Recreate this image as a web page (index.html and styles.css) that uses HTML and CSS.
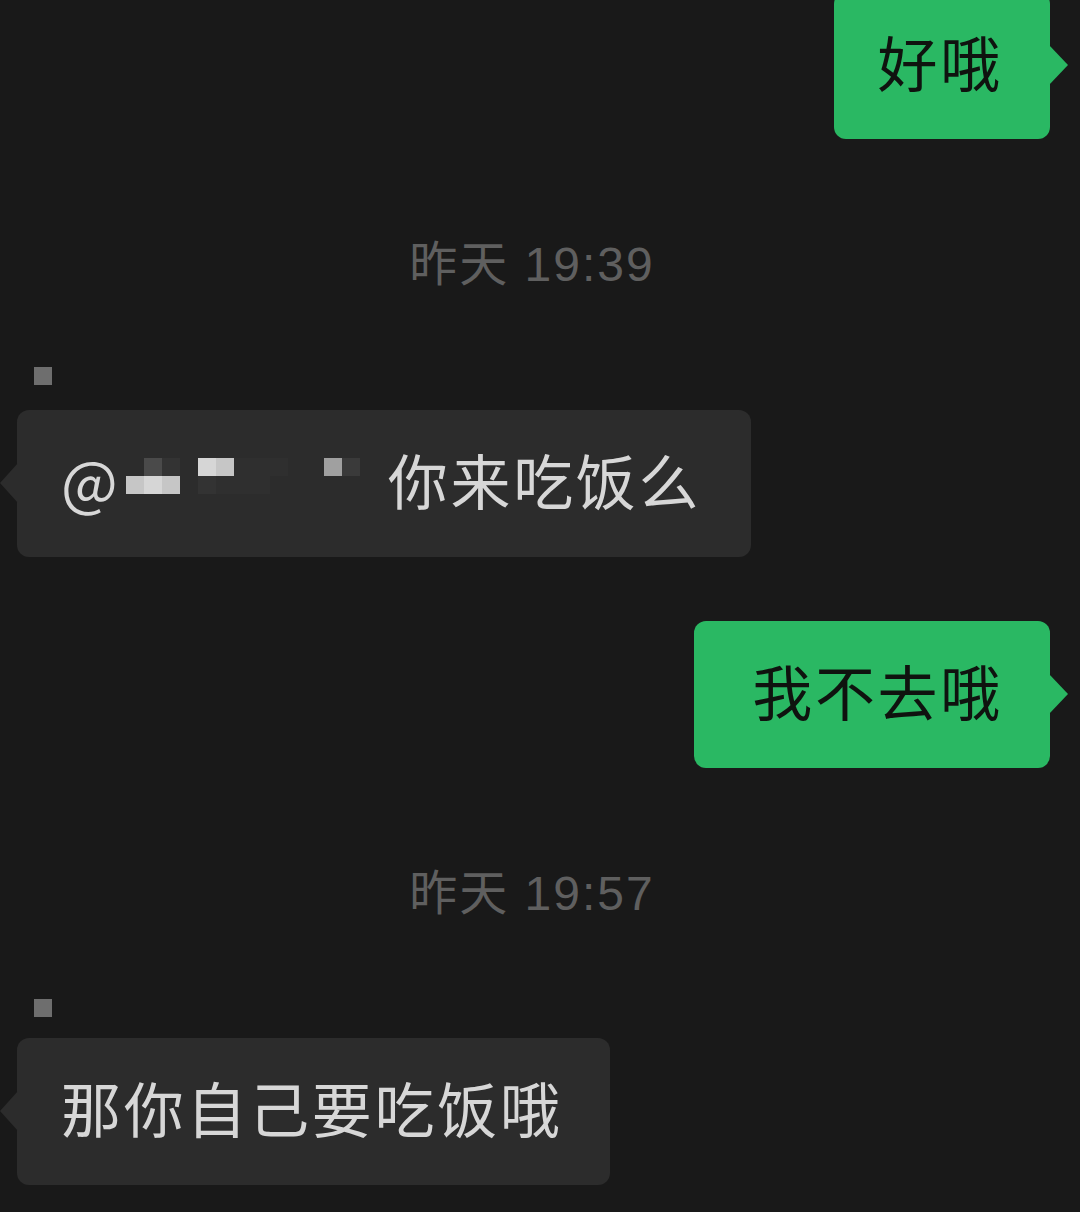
FILE: index.html
```html
<!DOCTYPE html>
<html lang="zh-CN">
<head>
<meta charset="utf-8">
<title>聊天</title>
<link rel="stylesheet" href="styles.css">
</head>
<body>
<div class="chat">
  <div class="row row-right row-first">
    <div class="bubble bubble-green">好哦</div>
  </div>

  <div class="time">昨天 19:39</div>

  <div class="row row-left">
    <div class="sender"><span class="avatar-dot"></span></div>
    <div class="bubble bubble-gray bubble-mention">
      <span class="at">@</span>
      <span class="mosaic">
        <i class="c0"></i><i class="c4"></i><i class="c2"></i><i class="c0"></i><i class="c9"></i><i class="c8"></i><i class="c1"></i><i class="c1"></i><i class="c1"></i><i class="c0"></i><i class="c0"></i><i class="c7"></i><i class="c3"></i>
        <i class="c8"></i><i class="c9"></i><i class="c8"></i><i class="c0"></i><i class="c2"></i><i class="c1"></i><i class="c1"></i><i class="c1"></i><i class="c0"></i><i class="c0"></i><i class="c0"></i><i class="c0"></i><i class="c0"></i>
      </span>
      <span class="msg-text">你来吃饭么</span>
    </div>
  </div>

  <div class="row row-right">
    <div class="bubble bubble-green bubble-wide">我不去哦</div>
  </div>

  <div class="time time-second">昨天 19:57</div>

  <div class="row row-left">
    <div class="sender"><span class="avatar-dot"></span></div>
    <div class="bubble bubble-gray">那你自己要吃饭哦</div>
  </div>
</div>
</body>
</html>
```

FILE: styles.css
```css
html, body {
  margin: 0;
  padding: 0;
  background: #191919;
}

body {
  width: 1080px;
  height: 1212px;
  overflow: hidden;
  font-family: "Noto Sans CJK SC", "Noto Sans", sans-serif;
}

.chat {
  display: flex;
  flex-direction: column;
}

.row {
  display: flex;
  flex-direction: column;
}

.row-right {
  align-items: flex-end;
  padding-right: 30px;
}

.row-left {
  align-items: flex-start;
  padding-left: 17px;
}

.row-first {
  margin-top: -8px;
}

.bubble {
  position: relative;
  box-sizing: border-box;
  height: 147px;
  padding: 0 47px 10px 44px;
  border-radius: 12px;
  font-size: 60px;
  letter-spacing: 2.7px;
  line-height: 137px;
  white-space: nowrap;
}

.bubble-green {
  background: #2ab863;
  color: #0f130f;
}

.bubble-green::after {
  content: "";
  position: absolute;
  right: -18px;
  top: 53px;
  border-style: solid;
  border-width: 20px 0 20px 19px;
  border-color: transparent transparent transparent #2ab863;
}

.bubble-wide {
  padding-left: 58px;
}

.bubble-gray {
  background: #2c2c2c;
  color: #d7d7d7;
}

.bubble-gray::before {
  content: "";
  position: absolute;
  left: -17px;
  top: 53px;
  border-style: solid;
  border-width: 20px 18px 20px 0;
  border-color: transparent #2c2c2c transparent transparent;
}

.time {
  align-self: center;
  margin: 96px 16px 0 0;
  height: 60px;
  font-family: "Liberation Sans", "Noto Sans CJK SC", sans-serif;
  font-size: 48px;
  letter-spacing: 2px;
  line-height: 60px;
  color: #5f5f5f;
}

.time-second {
  margin-top: 96px;
}

.row + .row {
  margin-top: 64px;
}

.time + .row {
  margin-top: 72px;
}

.time-second + .row {
  margin-top: 75px;
}

.sender {
  height: 18px;
  margin: 0 0 25px 17px;
}

.time-second + .row .sender {
  margin-bottom: 21px;
}

.avatar-dot {
  display: block;
  width: 18px;
  height: 18px;
  background: #6e6e6e;
}

.bubble-mention {
  display: flex;
  align-items: center;
  padding-right: 50px;
}

.at {
  display: block;
  letter-spacing: 0;
}

.mosaic {
  display: grid;
  grid-template-columns: repeat(13, 18px);
  grid-template-rows: repeat(2, 18px);
  margin: 0 28px 5px 8px;
}

.mosaic i {
  display: block;
  width: 18px;
  height: 18px;
}

.mosaic .c0 { background: #2c2c2c; }
.mosaic .c1 { background: #2f2f2f; }
.mosaic .c2 { background: #333333; }
.mosaic .c3 { background: #3a3a3a; }
.mosaic .c4 { background: #4a4a4a; }
.mosaic .c7 { background: #a0a0a0; }
.mosaic .c8 { background: #c6c6c6; }
.mosaic .c9 { background: #d6d6d6; }

.msg-text {
  display: block;
}
```
